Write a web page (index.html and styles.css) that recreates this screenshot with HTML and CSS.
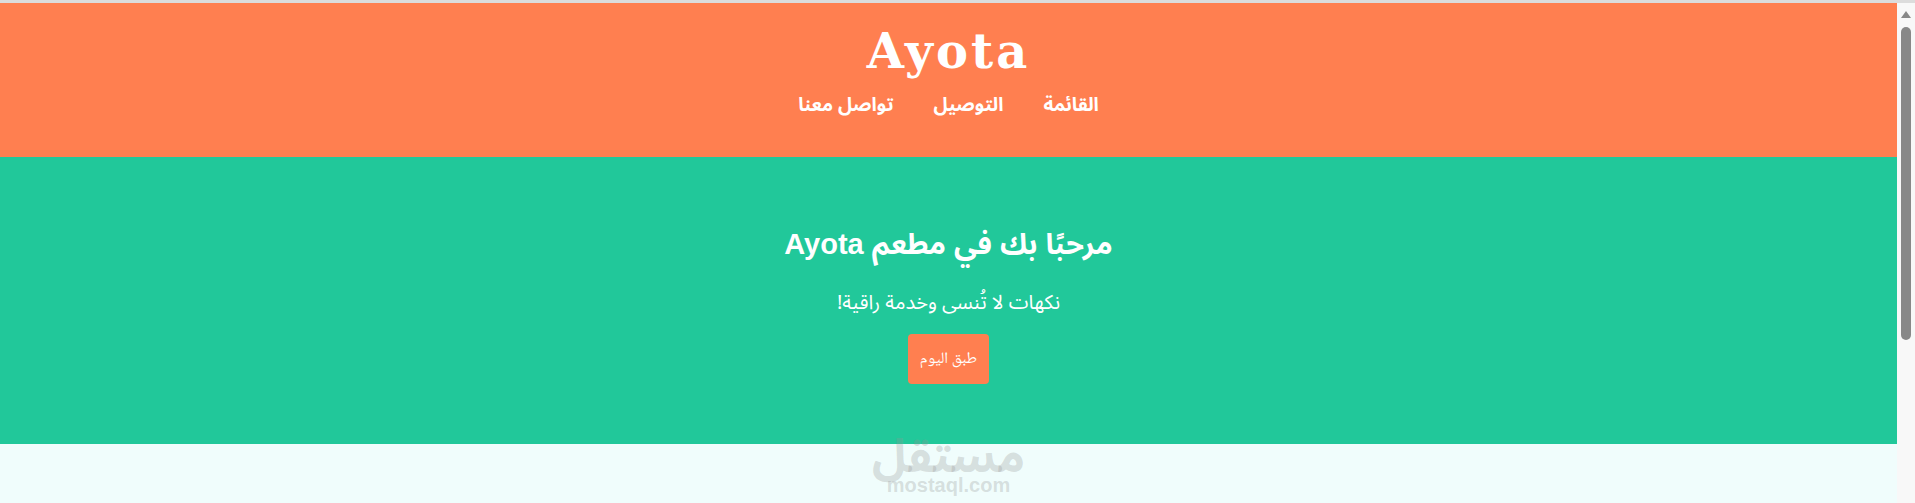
FILE: index.html
```html
<!DOCTYPE html>
<html lang="ar" dir="rtl">
<head>
  <meta charset="UTF-8">
  <meta name="viewport" content="width=device-width, initial-scale=1.0">
  <title>Ayota</title>
  <link rel="stylesheet" href="styles.css">
</head>
<body>
  <div class="window">
    <div class="page">
      <header class="site-header">
        <h1 class="logo">Ayota</h1>
        <nav class="main-nav">
          <a href="#menu">القائمة</a>
          <a href="#delivery">التوصيل</a>
          <a href="#contact">تواصل معنا</a>
        </nav>
      </header>

      <section class="hero">
        <h2>مرحبًا بك في مطعم Ayota</h2>
        <p>نكهات لا تُنسى وخدمة راقية!</p>
        <button class="hero-button">طبق اليوم</button>
      </section>

      <section class="menu-section"></section>

      <div class="watermark" aria-hidden="true">
        <span class="watermark-logo">مستقل</span>
        <span class="watermark-site">mostaql.com</span>
      </div>
    </div>

    <div class="scrollbar" aria-hidden="true">
      <div class="scroll-arrow"></div>
      <div class="scroll-thumb"></div>
    </div>
  </div>
</body>
</html>
```

FILE: styles.css
```css
:root {
  --coral: #ff7f50;
  --teal: #21c89a;
  --light-bg: #f0fdfc;
  --text-light: #ffffff;
  --arabic-sans: 'Noto Sans Arabic', 'Noto Sans Arabic UI', 'DejaVu Sans', sans-serif;
}

html, body {
  margin: 0;
  height: 100%;
  overflow: hidden;
}

body {
  font-family: var(--arabic-sans);
  background-color: var(--light-bg);
  border-top: 3px solid #dcdcdc;
  box-sizing: border-box;
}

.window {
  display: flex;
  direction: ltr;
  height: 100%;
}

.page {
  flex: 1;
  direction: rtl;
  position: relative;
  text-align: center;
}

.site-header {
  background-color: var(--coral);
  color: var(--text-light);
  height: 154px;
  box-sizing: border-box;
  padding-top: 20px;
}

.logo {
  font-family: 'DejaVu Serif', serif;
  font-size: 48px;
  line-height: 56px;
  letter-spacing: 3px;
  margin: 0;
}

.main-nav {
  display: flex;
  justify-content: center;
  gap: 40px;
  margin-top: 11px;
}

.main-nav a {
  color: var(--text-light);
  text-decoration: none;
  font-weight: bold;
  font-size: 19px;
  line-height: 30px;
}

.hero {
  background-color: var(--teal);
  color: var(--text-light);
  height: 287px;
  box-sizing: border-box;
  padding-top: 65px;
}

.hero h2 {
  font-family: 'Liberation Sans', var(--arabic-sans);
  font-size: 29px;
  line-height: 44px;
  margin: 0 0 21px;
}

.hero p {
  font-size: 20px;
  line-height: 32px;
  margin: 0 0 15px;
}

.hero-button {
  background-color: var(--coral);
  color: var(--text-light);
  font-family: 'Noto Naskh Arabic', 'Liberation Serif', 'DejaVu Sans', serif;
  font-size: 16px;
  border: none;
  border-radius: 4px;
  padding: 0 12px;
  min-width: 81px;
  height: 50px;
  cursor: pointer;
}

.menu-section {
  height: 100px;
}

.watermark {
  position: absolute;
  top: 436px;
  left: 50%;
  transform: translateX(-50%);
  display: flex;
  flex-direction: column;
  align-items: center;
  color: rgba(150, 150, 150, 0.3);
  font-weight: bold;
  line-height: 1;
}

.watermark-logo {
  font-size: 46px;
  line-height: 38px;
}

.watermark-site {
  font-family: 'Liberation Sans', sans-serif;
  font-size: 20px;
  margin-top: -2px;
}

.scrollbar {
  width: 18px;
  background-color: #f8f8f8;
  display: flex;
  flex-direction: column;
  align-items: center;
}

.scroll-arrow {
  width: 0;
  height: 0;
  margin-top: 8px;
  border-left: 5px solid transparent;
  border-right: 5px solid transparent;
  border-bottom: 7px solid #888;
}

.scroll-thumb {
  width: 10px;
  height: 313px;
  margin-top: 9px;
  background-color: #888;
  border-radius: 5px;
}
```
